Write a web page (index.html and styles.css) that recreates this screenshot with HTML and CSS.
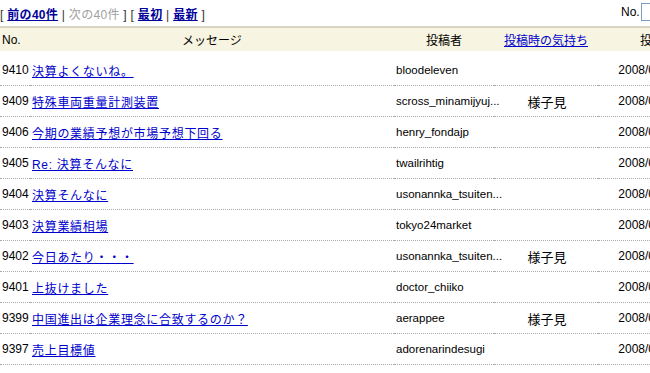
FILE: index.html
```html
<!DOCTYPE html>
<html lang="ja">
<head>
<meta charset="UTF-8">
<title>掲示板</title>
<link rel="stylesheet" href="styles.css">
</head>
<body>
    <div class="topBar">
        <div class="pager">
            [ <a href="#" class="strong">前の40件</a> | <span class="off">次の40件</span> ] [ <a href="#" class="strong">最初</a> | <a href="#" class="strong">最新</a> ]
        </div>
        <div class="jump">
            <label for="jumpNo">No.</label><input type="text" id="jumpNo">
        </div>
    </div>
    <table class="board">
        <colgroup>
            <col class="cNo">
            <col class="cMsg">
            <col class="cUser">
            <col class="cMood">
            <col class="cDate">
        </colgroup>
        <thead>
            <tr>
                <th class="left">No.</th>
                <th>メッセージ</th>
                <th>投稿者</th>
                <th><a href="#">投稿時の気持ち</a></th>
                <th>投稿日時</th>
            </tr>
        </thead>
        <tbody>
            <tr class="spacer"><td colspan="5"></td></tr>
            <tr><td>9410</td><td><a href="#">決算よくないね。</a></td><td class="user">bloodeleven</td><td class="mood"></td><td class="date">2008/02/07 18:42</td></tr>
            <tr><td>9409</td><td><a href="#">特殊車両重量計測装置</a></td><td class="user">scross_minamijyuj...</td><td class="mood">様子見</td><td class="date">2008/02/07 17:15</td></tr>
            <tr><td>9406</td><td><a href="#">今期の業績予想が市場予想下回る</a></td><td class="user">henry_fondajp</td><td class="mood"></td><td class="date">2008/02/07 15:31</td></tr>
            <tr><td>9405</td><td><a href="#">Re: 決算そんなに</a></td><td class="user">twailrihtig</td><td class="mood"></td><td class="date">2008/02/07 15:08</td></tr>
            <tr><td>9404</td><td><a href="#">決算そんなに</a></td><td class="user">usonannka_tsuiten...</td><td class="mood"></td><td class="date">2008/02/07 15:02</td></tr>
            <tr><td>9403</td><td><a href="#">決算業績相場</a></td><td class="user">tokyo24market</td><td class="mood"></td><td class="date">2008/02/07 14:47</td></tr>
            <tr><td>9402</td><td><a href="#">今日あたり・・・</a></td><td class="user">usonannka_tsuiten...</td><td class="mood">様子見</td><td class="date">2008/02/07 10:12</td></tr>
            <tr><td>9401</td><td><a href="#">上抜けました</a></td><td class="user">doctor_chiiko</td><td class="mood"></td><td class="date">2008/02/06 13:55</td></tr>
            <tr><td>9399</td><td><a href="#">中国進出は企業理念に合致するのか？</a></td><td class="user">aerappee</td><td class="mood">様子見</td><td class="date">2008/02/06 09:20</td></tr>
            <tr><td>9397</td><td><a href="#">売上目標値</a></td><td class="user">adorenarindesugi</td><td class="mood"></td><td class="date">2008/02/05 22:36</td></tr>
        </tbody>
    </table>
</body>
</html>
```

FILE: styles.css
```css
body {
    margin: 0;
    font-family: "Liberation Sans", "Noto Sans CJK JP", sans-serif;
    font-size: 12px;
    color: #000;
    overflow: hidden;
    width: 650px;
}

a {
    color: #0000cc;
}

.topBar {
    display: flex;
    justify-content: space-between;
    align-items: center;
    height: 26px;
    width: 700px;
}

.pager {
    color: #333;
    letter-spacing: 0.3px;
}

.pager .strong {
    font-weight: bold;
    color: #000099;
}

.pager .off {
    color: #a0a0a0;
}

.jump {
    display: flex;
    align-items: center;
    width: 79px;
    padding-bottom: 2px;
}

.jump label {
    margin-right: 1px;
}

.jump input {
    width: 60px;
    height: 16px;
    padding: 0;
    border: 1px solid #7f9db9;
}

.board {
    border-collapse: collapse;
    table-layout: fixed;
    width: 730px;
}

.cNo { width: 30px; }
.cMsg { width: 364px; }
.cUser { width: 100px; }
.cMood { width: 104px; }
.cDate { width: 132px; }

.board th {
    background-color: #f7f5e2;
    border-top: 2px solid #d8d4c4;
    font-weight: normal;
    height: 23px;
    padding: 0;
    text-align: center;
}

.board th.left {
    text-align: left;
    padding-left: 2px;
}

.board td {
    height: 30px;
    padding: 0 0 0 2px;
    border-bottom: 1px dotted #aaa;
    white-space: nowrap;
    overflow: hidden;
}

.board td a {
    letter-spacing: 0.7px;
}

.board td.user {
    font-size: 11.5px;
    overflow: visible;
}

.board tr.spacer td {
    height: 4px;
    border: none;
    padding: 0;
}

.board td.mood {
    text-align: center;
    font-size: 13px;
}

.board td.date {
    text-align: center;
}
```
